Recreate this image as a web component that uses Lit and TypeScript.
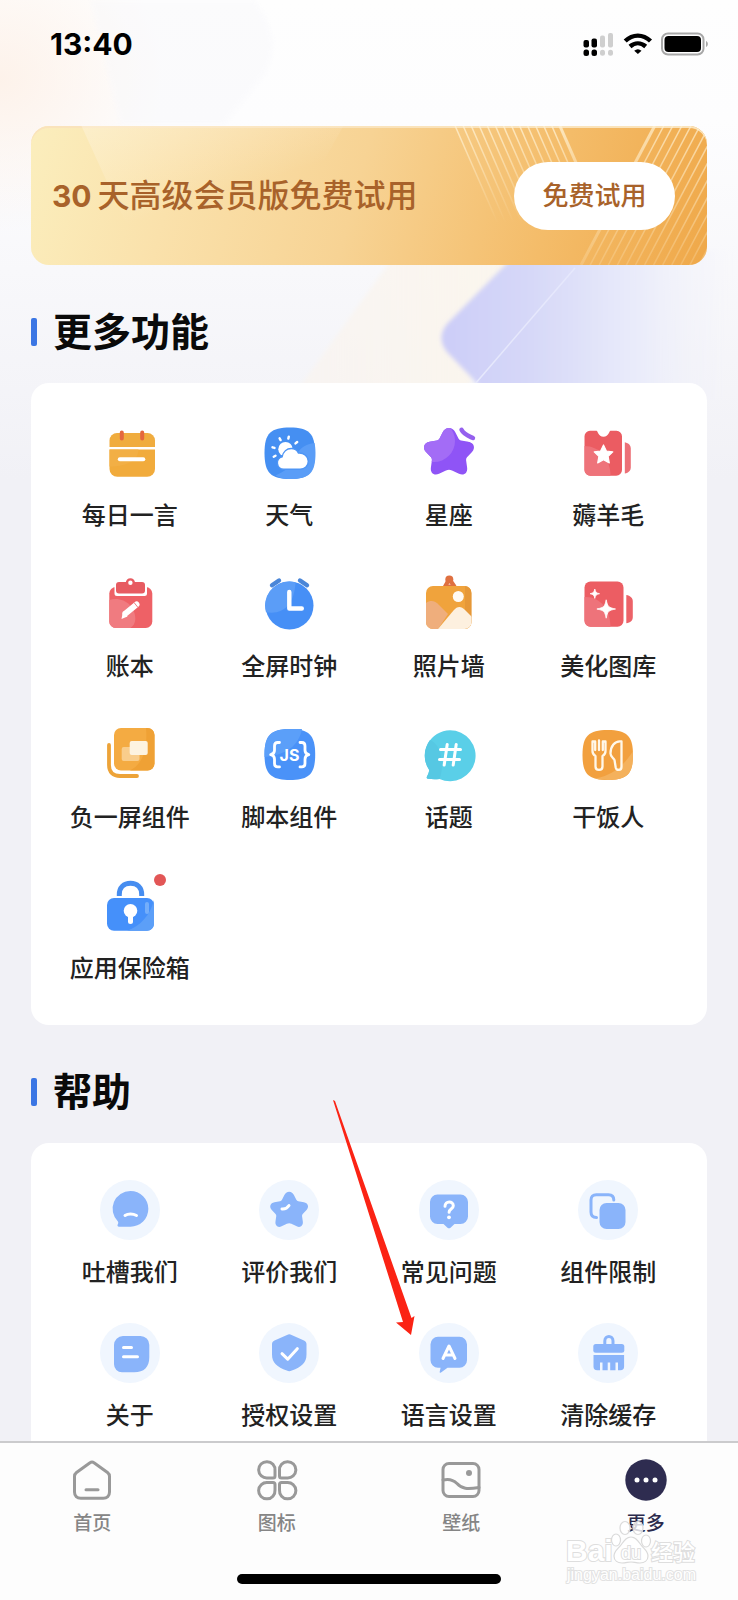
import { LitElement, html, svg, css, TemplateResult, SVGTemplateResult } from "lit";
import { customElement, property } from "lit/decorators.js";

interface Feature {
  label: string;
  icon: SVGTemplateResult;
  badge?: boolean;
}

const STAR =
  "M30 5c3 0 5 1.800 6.300 4.300l3.200 6.200c.6 1 1.400 1.700 2.600 1.900l7.400 1.400c5.500 1 7.300 6.200 3.500 10.200l-5 5.300c-.8.900-1.100 1.900-.9 3l1 7.200c.8 5.500-3.300 8.600-8.100 6.300l-7-3.400c-2-.9-4-.9-6 0l-7 3.400c-4.800 2.300-8.900-.8-8.100-6.300l1-7.200c.2-1.100-.1-2.100-.9-3l-5-5.300c-3.800-4-2-9.200 3.500-10.200l7.400-1.400c1.200-.2 2-.9 2.600-1.900l3.200-6.200C25 6.800 27 5 30 5z";
const SMALL_STAR =
  "M25.500 22l2.900 6 6.400.9-4.700 4.500 1.200 6.500-5.800-3.100-5.800 3.100 1.200-6.500-4.700-4.500 6.400-.9z";

const features: Feature[] = [
  {
    label: "每日一言",
    icon: svg`
      <path d="M17 10h30.500a7.500 7.500 0 0 1 7.500 7.500V24H9.500v-6.500A7.500 7.500 0 0 1 17 10z" fill="#f0ac3e"/>
      <path d="M9.500 26.500H55V46a7.800 7.800 0 0 1-7.800 7.800H17.300A7.800 7.800 0 0 1 9.500 46z" fill="#f1ab3c"/>
      <path d="M9.500 26.500h29c0 10-10 17-29 17z" fill="#f2af45"/>
      <path d="M21.800 9.500v6M42.200 9.500v6" stroke="#e4673d" stroke-width="4" stroke-linecap="round"/>
      <path d="M19.800 36.200h23.500" stroke="#fff" stroke-width="4" stroke-linecap="round"/>`,
  },
  {
    label: "天气",
    icon: svg`
      <path d="M31 4.500c19 0 25 6 25 25.500S50 56 31 56 5.500 50 5.500 30 12 4.500 31 4.500z" fill="#458ff2"/>
      <path d="M55.500 20c-12 1-18 9-19 16-4 8-12 13-20 16.500 4 2.500 8 3.500 15 3.500 19 0 25-6 25-26 0-4-.3-7-1-10z" fill="#5a9df7"/>
      <circle cx="26.500" cy="26.200" r="7.200" fill="#fff"/>
      <path d="M20.600 15.300l1 1.800M29.800 13.600l-.5 2M38.200 19l-1.700 1.400M13.500 24.300l2 .6M14.700 33.700l1.800-1" stroke="#fff" stroke-width="2.400" stroke-linecap="round"/>
      <path d="M24.800 46.300a6.400 6.400 0 0 1-1.600-12.600c1-5 4.600-8.200 9-8.200 3.500 0 6 1.800 7.300 4.600 5.400-.4 9.800 3.400 9.800 8.200 0 4.600-3.600 8-8.200 8z" fill="#fff" stroke="#4e95f5" stroke-width="1.400"/>`,
  },
  {
    label: "星座",
    icon: svg`
      <clipPath id="star-clip"><path d=${STAR}/></clipPath>
      <path d=${STAR} fill="#8f54f6"/>
      <circle cx="15" cy="18" r="21" fill="#a36cf6" clip-path="url(#star-clip)"/>
      <path d="M42.500 7.500c3 4 6 5.500 12 8" fill="none" stroke="#fff" stroke-width="9" stroke-linecap="round"/>
      <path d="M42.500 6.800c2.500 5 6.500 6 11.500 8.200" fill="none" stroke="#9560ee" stroke-width="4.400" stroke-linecap="round"/>`,
  },
  {
    label: "薅羊毛",
    icon: svg`
      <path d="M12 7.800h6.500c1.500 0 1.500 6 7 6s5.500-6 7-6h6a5.500 5.500 0 0 1 5.500 5.500V47a5.800 5.800 0 0 1-5.800 5.800H12.300A5.800 5.800 0 0 1 6.500 47V13.300A5.500 5.500 0 0 1 12 7.800z" fill="#eb5c62"/>
      <path d="M6.500 23c14 0 26 12 26 29.800H12.300A5.800 5.800 0 0 1 6.500 47z" fill="#ee737a"/>
      <path d=${SMALL_STAR} fill="#fff" stroke="#fff" stroke-width="1.200" stroke-linejoin="round"/>
      <path d="M46.800 19.300c4 1 6 3 6 6.700v18c0 3.700-2 5.700-6 6.500z" fill="#ec7077"/>`,
  },
  {
    label: "账本",
    icon: svg`
      <rect x="9.300" y="13" width="43" height="41" rx="6.500" fill="#ee6166"/>
      <path d="M9.300 26c14-4 26 6 26 19 0 4-2 7-5 9H15.800a6.500 6.500 0 0 1-6.500-6.500z" fill="#f07b80"/>
      <path d="M17 8.500h27.500v11H17z" fill="#e75b61" stroke="#fff" stroke-width="5" stroke-linejoin="round"/>
      <rect x="16" y="8" width="29" height="11.500" rx="3" fill="#e75b61"/>
      <circle cx="30.400" cy="8.800" r="3.400" fill="#fff" stroke="#e75b61" stroke-width="2.400"/>
      <path d="M25.500 39.500l11-9" stroke="#fff" stroke-width="6" stroke-linecap="round"/>
      <path d="M23 37l4.500 5.500-6 2.500z" fill="#fff"/>
      <path d="M34 28.500l4 5" stroke="#f07b80" stroke-width="1"/>`,
  },
  {
    label: "全屏时钟",
    icon: svg`
      <circle cx="30.500" cy="31.500" r="24" fill="#468ff6"/>
      <path d="M30.500 7.500a24 24 0 0 1 6 .8c-1 22-12 33-29.500 30a24 24 0 0 1 23.500-30.800z" fill="#5b9df7"/>
      <path d="M13 11.300l7-4.800M48 11.300l-7-4.800" stroke="#4a86d8" stroke-width="4.400" stroke-linecap="round"/>
      <path d="M30.300 18v16.500h12.500" fill="none" stroke="#fff" stroke-width="4.400" stroke-linecap="round" stroke-linejoin="round"/>`,
  },
  {
    label: "照片墙",
    icon: svg`
      <clipPath id="photo-clip"><rect x="7" y="12" width="45.500" height="43" rx="7"/></clipPath>
      <path d="M26 12.500l4.300-7.500 5.200 7.500z" fill="none" stroke="#df7040" stroke-width="4" stroke-linejoin="round"/>
      <circle cx="30.300" cy="5.500" r="4" fill="#df7040"/>
      <g clip-path="url(#photo-clip)">
        <path d="M7 12h45.500v43H7z" fill="#f0a33c"/>
        <path d="M46 12h7v43h-7z" fill="#e69838"/>
        <path d="M7 29c5-3.500 9-2 13 2l9 9-10 15H7z" fill="#efae7c"/>
        <path d="M19 55l15.500-18.500c4-4.500 7.500-4.500 11.500-.5l7 7V55z" fill="#fdf0df"/>
      </g>
      <circle cx="39.300" cy="22.500" r="5.500" fill="#fffaf2"/>`,
  },
  {
    label: "美化图库",
    icon: svg`
      <rect x="6.500" y="7.500" width="39" height="45.300" rx="6" fill="#ec5d63"/>
      <path d="M6.500 23c15-1 26 12 26 29.800h-20a6 6 0 0 1-6-6z" fill="#ee737a"/>
      <path d="M16.800 15c.7 3.300 1.400 4 4.700 4.700-3.300.7-4 1.400-4.700 4.700-.7-3.300-1.400-4-4.700-4.700 3.300-.7 4-1.400 4.700-4.700z" fill="#fff" stroke="#fff" stroke-width=".8"/>
      <path d="M28.200 25.800c1.500 7 2.200 7.700 9.300 9.200-7.100 1.500-7.800 2.200-9.300 9.200-1.500-7-2.200-7.700-9.300-9.200 7.100-1.500 7.800-2.200 9.300-9.200z" fill="#fff" stroke="#fff" stroke-width=".8"/>
      <path d="M48.300 21c4 .8 6.500 2.800 6.500 6.500V43c0 3.700-2.500 5.500-6.500 6.300z" fill="#ec6268"/>`,
  },
  {
    label: "负一屏组件",
    icon: svg`
      <path d="M9 20v20c0 7 4 11 11 11h17" fill="none" stroke="#eda338" stroke-width="3.800" stroke-linecap="round"/>
      <rect x="14" y="3" width="40.500" height="42.500" rx="7" fill="#f4ab42"/>
      <path d="M46 3h1.500a7 7 0 0 1 7 7v28.500a7 7 0 0 1-7 7H30c12-6 18-20 16-42.500z" fill="#efa135"/>
      <rect x="21.700" y="22" width="17.800" height="14" rx="2" fill="#f9cd8b"/>
      <rect x="29.700" y="16" width="18" height="14" rx="2" fill="#fdf3e0"/>`,
  },
  {
    label: "脚本组件",
    icon: svg`
      <path d="M31 4c19 0 25.200 6 25.200 25.500S50 55 31 55 5.500 49 5.500 29.500 12 4 31 4z" fill="#4a92f8"/>
      <path d="M5.600 32C5 12 11 4 31 4h12c-3 16-15 26-37.400 28z" fill="#5b9ff9"/>
      <path d="M20.500 17.500h-1.800c-2.400 0-3.200 1.200-3.200 3.400v4.300c0 2.400-1 3.900-3.800 4.500 2.800.6 3.800 2.100 3.800 4.500v4.300c0 2.200.8 3.400 3.200 3.400h1.800M41 17.500h1.800c2.400 0 3.200 1.200 3.200 3.400v4.300c0 2.400 1 3.900 3.800 4.500-2.800.6-3.800 2.100-3.800 4.500v4.300c0 2.200-.8 3.400-3.200 3.400H41" fill="none" stroke="#fff" stroke-width="2.800" stroke-linecap="round" stroke-linejoin="round"/>
      <text x="30.500" y="35.500" text-anchor="middle" class="glyph">JS</text>`,
  },
  {
    label: "话题",
    icon: svg`
      <path d="M31 5.200a25.500 25.500 0 1 1-10.500 48.700c-4 .4-8 .3-11.700-.2-1.200-.2-1.300-1.300-.8-2.200 1-1.800 2-4 2.200-6.500A25.500 25.500 0 0 1 31 5.200z" fill="#5acfe8"/>
      <path d="M11 15A25.500 25.500 0 0 0 10.200 45c-.2 2.500-1.200 4.700-2.200 6.500-.5.900-.4 2 .8 2.200 3.700.5 7.700.6 11.700.2C25 44 24 20 11 15z" fill="#56c8e3"/>
      <path d="M21.500 24.500h20M20.500 34.500h20M28.200 19.500l-3 20.500M37.200 19.500l-3 20.500" fill="none" stroke="#fff" stroke-width="3" stroke-linecap="round"/>`,
  },
  {
    label: "干饭人",
    icon: svg`
      <path d="M29.700 5C49 5 55 11 55 30s-6 25-25.300 25S4.500 49 4.500 30s6-25 25.200-25z" fill="#f2a03e"/>
      <path d="M55 30c0 19-6 25-25.300 25-5 0-9-.4-12.300-1.400C34 50 45 42 55 26z" fill="#f4b15c"/>
      <path d="M14.500 16.500h2.700v8.500M14.500 16.500V26c0 2.500 1 4 3 5v10.500c0 4.500 7 4.500 7 0V31c2-1 3-2.500 3-5v-9.500h-2.700v8.500M21 15.500V25" fill="none" stroke="#fff8ea" stroke-width="2.300" stroke-linecap="round" stroke-linejoin="round"/>
      <path d="M43.500 16.500c-7-1-11 5-11 12 0 3 2.500 4 4 6.500l1.200 7.500c.8 3.500 5.800 3.200 5.800-.5z" fill="none" stroke="#fff8ea" stroke-width="2.300" stroke-linejoin="round"/>`,
  },
  {
    label: "应用保险箱",
    badge: true,
    icon: svg`
      <path d="M19.300 20v-1.500c0-7 4.500-11.300 11.200-11.300s11.200 4.300 11.200 11.300V20" fill="none" stroke="#468df0" stroke-width="5"/>
      <rect x="7" y="22" width="47" height="32.700" rx="7" fill="#4590fa"/>
      <path d="M54 24v24a7 7 0 0 1-7 6.700H27C40 50 50 40 54 24z" fill="#5c9ff8"/>
      <circle cx="30.500" cy="34.800" r="6.800" fill="#fff"/>
      <path d="M30.500 38v7.500" stroke="#fff" stroke-width="5" stroke-linecap="round"/>
      <path d="M47 28v8" stroke="#74aefa" stroke-width="4" stroke-linecap="round"/>`,
  },
];

const help: Feature[] = [
  {
    label: "吐槽我们",
    icon: svg`
      <path d="M30.500 11a17.700 17.700 0 1 1 0 35.700H19c-1.400 0-1.900-1-1.300-2.200.6-1.100.8-2 .2-3A17.800 17.800 0 0 1 30.500 11z"/>
      <path class="line" d="M25 35.500c3-2 8-2 11.500 0"/>`,
  },
  {
    label: "评价我们",
    icon: svg`
      <g transform="translate(7.500 8) scale(.755)"><path d=${STAR}/></g>
      <path class="line" d="M23 29c3 .3 5.500-1.200 7-3.500"/>`,
  },
  {
    label: "常见问题",
    icon: svg`
      <path d="M18.500 14.500h23a7.500 7.500 0 0 1 7.500 7.500v14.500a7.500 7.500 0 0 1-7.500 7.500h-6l-4 3.700c-1 .8-2 .8-3 0l-4-3.700h-6a7.500 7.500 0 0 1-7.500-7.500V22a7.500 7.500 0 0 1 7.500-7.500z"/>
      <path class="line" d="M26 26.300c0-5.800 8.300-5.600 8.300-.6 0 3.400-4.200 3.300-4.200 6.500"/>
      <circle class="dot" cx="30" cy="37.300" r="1.900"/>`,
  },
  {
    label: "组件限制",
    icon: svg`
      <rect x="21.500" y="23" width="26" height="26" rx="7"/>
      <path class="edge" d="M18.500 37.500c-3.800 0-5.500-2-5.500-5.500V20c0-3.500 2-5.300 5.300-5.300H30.500c3.600 0 5.300 1.800 5.300 5.300"/>`,
  },
  {
    label: "关于",
    icon: svg`
      <path d="M23 13h17.500a8.800 8.800 0 0 1 8.800 8.800v12.400C49.300 44 44 49.300 34.200 49.300H22a8 8 0 0 1-8-8V22a9 9 0 0 1 9-9z"/>
      <path class="line" d="M23.500 24.500h8M23.500 33.700h14"/>`,
  },
  {
    label: "授权设置",
    icon: svg`
      <path d="M28 12c1.600-.9 3-.9 4.600 0L45 17.500c1.700.8 2.500 2 2.500 3.800v10c0 9-5 12.500-14.700 16.300-1.700.7-3.300.7-5 0C18 43.800 13 40.300 13 31.300v-10c0-1.800.8-3 2.500-3.800z"/>
      <path class="line" d="M23 30.700l5.700 5.500 9.600-10.500"/>`,
  },
  {
    label: "语言设置",
    icon: svg`
      <path d="M19 13.700h21.500a7.500 7.500 0 0 1 7.500 7.500v16a7.500 7.500 0 0 1-7.500 7.500h-12L22 49.500c-.8.600-1.500.1-1.300-.8l.9-4H19a7.500 7.500 0 0 1-7.500-7.500v-16a7.500 7.500 0 0 1 7.500-7.500z"/>
      <path class="line" d="M24 35.500l6-12.500 6 12.500M26.500 32h7.500"/>`,
  },
  {
    label: "清除缓存",
    icon: svg`
      <path class="edge" d="M26.800 22v-4c0-6 8.200-6 8.200 0v4"/>
      <rect x="15.300" y="21" width="31" height="8.800" rx="2.500"/>
      <path d="M15.500 32h30.600v11.500c0 2.500-1.200 3.700-3.700 3.700H40V39.500h-2.500v7.700h-5.300V39.500h-2.500v7.700h-5.200V39.500H22v7.700h-2.800c-2.500 0-3.700-1.200-3.700-3.700z"/>`,
  },
];

const tabs: Feature[] = [
  {
    label: "首页",
    icon: svg`
      <path d="M22 6.700c1.300-1 2.700-1 4 0l13.500 9.800c1.300 1 2 2.300 2 3.900V36c0 4-2.500 6.300-6.300 6.300H12.800C9 42.300 6.500 40 6.500 36V20.400c0-1.600.7-2.900 2-3.900z"/>
      <path d="M18 33.800h12"/>`,
  },
  {
    label: "图标",
    icon: svg`
      <path d="M22 14.500V20a2 2 0 0 1-2 2h-5.500a8.200 8.200 0 1 1 7.500-7.500zM26.500 14.500V20a2 2 0 0 0 2 2H34a8.200 8.200 0 1 0-7.500-7.500zM22 34v-5.500a2 2 0 0 0-2-2h-5.500A8.200 8.200 0 1 0 22 34zM26.500 34v-5.500a2 2 0 0 1 2-2H34a8.200 8.200 0 1 1-7.500 7.500z"/>`,
  },
  {
    label: "壁纸",
    icon: svg`
      <rect x="6" y="7.500" width="36" height="33" rx="6"/>
      <path d="M6 24c6-1.500 10-.5 14 3.500 5 5.500 10 6 22 4"/>
      <circle class="solid" cx="32" cy="17" r="3"/>`,
  },
  {
    label: "更多",
    icon: svg`
      <circle class="disc" cx="24" cy="24" r="20.700"/>
      <circle class="hole" cx="15" cy="24" r="2.500"/>
      <circle class="hole" cx="24" cy="24" r="2.500"/>
      <circle class="hole" cx="33" cy="24" r="2.500"/>`,
  },
];

const FONT = css`Inter, "Noto Sans CJK SC", "Liberation Sans", sans-serif`;

@customElement("status-bar")
class StatusBar extends LitElement {
  static styles = css`
    :host {
      display: flex;
      align-items: center;
      justify-content: space-between;
      height: 88px;
      padding: 0 30px 0 50px;
    }
    .time {
      font: 700 30px/40px ${FONT};
      color: #000;
    }
    .signals {
      display: block;
      width: 126px;
      height: 24px;
    }
  `;

  render() {
    return html`
      <span class="time">13:40</span>
      <svg class="signals" viewBox="0 0 126 24" role="img" aria-label="信号、无线网络和电量">
        <g>
          <rect x="1.500" y="8" width="5.500" height="7.500" rx="2"/>
          <rect x="9.500" y="6.500" width="5.500" height="9" rx="2"/>
          <rect x="1.500" y="17.500" width="5.500" height="6.500" rx="2.500"/>
          <rect x="9.500" y="17.500" width="5.500" height="6.500" rx="2.500"/>
        </g>
        <g fill="#cfcfcf">
          <rect x="18" y="3.500" width="5" height="12" rx="2"/>
          <rect x="26" y="1" width="5" height="14.500" rx="2"/>
          <rect x="18" y="17.800" width="5" height="6" rx="2.500"/>
          <rect x="26" y="17.800" width="5" height="6" rx="2.500"/>
        </g>
        <g fill="none" stroke="#000" stroke-width="4.400">
          <path d="M43.200 9c7.500-7.200 17.800-7.200 25.300 0"/>
          <path d="M48 14.500c4.800-4.200 10.900-4.200 15.700 0"/>
        </g>
        <path d="M52.200 18.700c2.300-2 5-2 7.300 0L55.900 22z"/>
        <rect x="80" y="1.500" width="41.500" height="21" rx="6" fill="none" stroke="#a8a8a8" stroke-width="2"/>
        <rect x="82.500" y="4" width="36.500" height="16" rx="4"/>
        <path d="M124 9c2.500.8 2.500 5.200 0 6z" fill="#a8a8a8"/>
      </svg>
    `;
  }
}

@customElement("trial-banner")
class TrialBanner extends LitElement {
  static styles = css`
    :host {
      display: grid;
      border-radius: 18px;
      overflow: hidden;
      background: linear-gradient(105deg, #fbeebd 0%, #fae1ab 22%, #f7d394 48%, #f4bc69 76%, #efa849 100%);
      box-shadow: inset 0 2px #fae3bb;
      height: 139px;
    }
    .rays,
    .content {
      grid-area: 1 / 1;
      min-width: 0;
      min-height: 0;
    }
    .rays {
      width: 100%;
      height: 100%;
    }
    .content {
      display: flex;
      align-items: center;
      justify-content: space-between;
      padding: 0 32px 0 21px;
    }
    .title {
      margin: 0;
      font: 500 32px/48px ${FONT};
      color: #a8622a;
      display: flex;
      align-items: center;
      gap: 6px;
    }
    .days {
      font-weight: 700;
      font-size: 30px;
    }
    .trial {
      width: 161px;
      height: 68px;
      border: 0;
      border-radius: 34px;
      padding: 0;
      background: #fff;
      color: #a8622a;
      font: 500 26px/36px ${FONT};
      white-space: nowrap;
    }
  `;

  render() {
    const left = Array.from({ length: 14 }, (_, i) => i);
    const right = Array.from({ length: 15 }, (_, i) => i);
    return html`
      <svg class="rays" viewBox="0 0 678 138" preserveAspectRatio="xMaxYMid slice" aria-hidden="true">
        <defs>
          <linearGradient id="fade" x1="0" y1="0" x2="0" y2="1">
            <stop offset="0" stop-color="#fff1d2" stop-opacity=".8"/>
            <stop offset="1" stop-color="#fff1d2" stop-opacity="0"/>
          </linearGradient>
          <linearGradient id="fade-right" x1="0" y1="0" x2="0" y2="1">
            <stop offset="0" stop-color="#fff1d2" stop-opacity=".7"/>
            <stop offset="1" stop-color="#fff1d2" stop-opacity=".2"/>
          </linearGradient>
          <linearGradient id="glow" x1="0" y1="0" x2=".6" y2="1">
            <stop offset="0" stop-color="#fff6e6" stop-opacity=".4"/>
            <stop offset=".6" stop-color="#fff6e6" stop-opacity="0"/>
          </linearGradient>
        </defs>
        <path d="M57 0h260L240 138H120z" fill="url(#glow)"/>
        ${left.map((i) => svg`<path d="M${428 + i * 8} 0L${470 + i * 8} 96" fill="none" stroke="url(#fade)" stroke-width=${i === 13 ? 3 : 1.5}/>`)}
        ${right.map((i) => svg`<path d="M${626 + i * 9} 0L${553 + i * 9} 138" fill="none" stroke="url(#fade-right)" stroke-width=${i === 0 ? 3 : 1.5}/>`)}
      </svg>
      <div class="content">
        <p class="title"><span class="days">30</span>天高级会员版免费试用</p>
        <button class="trial" type="button">免费试用</button>
      </div>
    `;
  }
}

@customElement("feature-grid")
class FeatureGrid extends LitElement {
  @property({ attribute: false }) items: Feature[] = [];
  @property({ type: Boolean, reflect: true }) soft = false;

  static styles = css`
    :host {
      display: grid;
      grid-template-columns: repeat(4, minmax(0, 1fr));
      row-gap: 40px;
      padding: 40px 19px 38px;
      border-radius: 18px;
      background: #fff;
    }
    :host([soft]) {
      row-gap: 32px;
      padding-top: 37px;
    }
    .item {
      display: flex;
      flex-direction: column;
      align-items: center;
      gap: 15px;
      padding: 0;
      border: 0;
      background: none;
      color: #222;
      font: 500 24px/36px ${FONT};
      white-space: nowrap;
    }
    .pic {
      position: relative;
      width: 60px;
      height: 60px;
      border-radius: 50%;
    }
    .icon {
      display: block;
      width: 60px;
      height: 60px;
    }
    .badge {
      position: absolute;
      top: -2px;
      right: -6px;
      width: 12px;
      height: 12px;
      border-radius: 50%;
      background: #e25656;
    }
    .glyph {
      fill: #fff;
      font: 700 16px Inter, sans-serif;
    }
    :host([soft]) .pic {
      background: #f0f6fe;
    }
    :host([soft]) .icon {
      fill: #8ab4fa;
    }
    .line {
      fill: none;
      stroke: #fff;
      stroke-width: 3;
      stroke-linecap: round;
      stroke-linejoin: round;
    }
    .edge {
      fill: none;
      stroke: #8ab4fa;
      stroke-width: 3;
      stroke-linecap: round;
    }
    .dot {
      fill: #fff;
    }
  `;

  render() {
    return this.items.map(
      (item) => html`
        <button class="item" type="button">
          <span class="pic">
            <svg class="icon" viewBox="0 0 60 60" aria-hidden="true">${item.icon}</svg>
            ${item.badge ? html`<span class="badge"></span>` : null}
          </span>
          <span>${item.label}</span>
        </button>
      `
    );
  }
}

@customElement("tab-bar")
class TabBar extends LitElement {
  static styles = css`
    :host {
      display: block;
      position: relative;
      border-top: 2px solid #cbcbcd;
      background: #fdfdfd;
      padding: 13px 0 16px;
    }
    .tabs {
      display: grid;
      grid-template-columns: repeat(4, minmax(0, 1fr));
    }
    .tab {
      display: flex;
      flex-direction: column;
      align-items: center;
      gap: 6px;
      color: #858585;
      font: 500 19px/28px ${FONT};
      text-decoration: none;
    }
    .tab.active {
      color: #2b2a4c;
    }
    .icon {
      width: 48px;
      height: 48px;
      fill: none;
      stroke: #999;
      stroke-width: 3;
      stroke-linecap: round;
      stroke-linejoin: round;
    }
    .solid {
      fill: #999;
      stroke: none;
    }
    .disc {
      fill: #2e2c50;
      stroke: none;
    }
    .hole {
      fill: #fff;
      stroke: none;
    }
    .indicator {
      width: 264px;
      height: 10px;
      margin: 36px auto 0;
      border-radius: 5px;
      background: #000;
    }
    .mark {
      position: absolute;
      right: 36px;
      bottom: 12px;
      width: 140px;
      height: 72px;
      pointer-events: none;
    }
    .mark text {
      fill: #fff;
      stroke: #dedede;
      stroke-width: 2;
      paint-order: stroke;
      font-family: "Liberation Sans", "Noto Sans CJK SC", sans-serif;
      font-weight: 700;
    }
    .mark .big {
      font-size: 30px;
    }
    .mark .mid {
      font-size: 22px;
      font-weight: 500;
    }
    .mark .du {
      font-size: 18px;
      font-weight: 400;
    }
    .mark .small {
      font-size: 16px;
      font-weight: 400;
      stroke: #e2e2e2;
    }
    .paw {
      fill: #fff;
      fill-opacity: 0.8;
      stroke: #dadada;
      stroke-width: 1.200;
    }
  `;

  render() {
    return html`
      <nav class="tabs">
        ${tabs.map(
          (tab, i) => html`
            <a class="tab ${i === 3 ? "active" : ""}" href="#">
              <svg class="icon" viewBox="0 0 48 48" aria-hidden="true">${tab.icon}</svg>
              <span>${tab.label}</span>
            </a>
          `
        )}
      </nav>
      <div class="indicator"></div>
      <svg class="mark" viewBox="0 0 140 72" aria-hidden="true">
        <text class="big" x="4" y="45">Bai</text>
        <g class="paw">
          <ellipse cx="54" cy="24" rx="4.500" ry="6"/>
          <ellipse cx="63" cy="12" rx="5" ry="6.500"/>
          <ellipse cx="76" cy="12" rx="5" ry="6.500"/>
          <ellipse cx="84" cy="25" rx="4.500" ry="6"/>
          <path d="M69 21c5 0 7 4 10 8s7 6 7 11-4 7-8 7-6-1-9-1-5 1-9 1-8-2-8-7 4-7 7-11 5-8 10-8z"/>
        </g>
        <text class="du" x="59" y="43">du</text>
        <text class="mid" x="89" y="44">经验</text>
        <text class="small" x="5" y="64">jingyan.baidu.com</text>
      </svg>
    `;
  }
}

@customElement("app-root")
class AppRoot extends LitElement {
  static styles = css`
    :host {
      display: grid;
      height: 100vh;
      overflow: hidden;
      background: linear-gradient(#fefefe 0, #fdfdfe 120px, #f8f8fb 270px, #f1f1f6 480px, #f1f1f6 100%);
      font-family: ${FONT};
    }
    .backdrop,
    .page {
      grid-area: 1 / 1;
      min-width: 0;
      min-height: 0;
    }
    .backdrop {
      width: 100%;
      height: 400px;
    }
    .page {
      display: flex;
      flex-direction: column;
    }
    .content {
      flex: 1;
      min-height: 0;
      overflow: hidden auto;
      scrollbar-width: none;
      padding: 38px 31px 0;
    }
    .section {
      position: relative;
    }
    .heading {
      display: flex;
      align-items: center;
      gap: 16px;
      margin: 0;
      padding: 43px 0 27px;
      font-size: 39px;
      line-height: 48px;
      font-weight: 600;
      color: #0a0a0a;
    }
    .heading::before {
      content: "";
      width: 6px;
      height: 28px;
      border-radius: 2px;
      background: #3b76e4;
    }
    .arrow {
      position: absolute;
      left: 299px;
      top: 74px;
      width: 90px;
      height: 240px;
      fill: #fb2314;
      pointer-events: none;
    }
  `;

  render(): TemplateResult {
    return html`
      <svg class="backdrop" viewBox="0 0 738 400" preserveAspectRatio="none" aria-hidden="true">
        <defs>
          <radialGradient id="peach">
            <stop offset="0" stop-color="#fdf1e8" stop-opacity=".9"/>
            <stop offset="1" stop-color="#fdf1e8" stop-opacity="0"/>
          </radialGradient>
          <linearGradient id="violet" x1="0" y1="0" x2="1" y2="0">
            <stop offset="0" stop-color="#cccdf8"/>
            <stop offset=".3" stop-color="#d6d8f8"/>
            <stop offset=".65" stop-color="#e9ebfa"/>
            <stop offset="1" stop-color="#f4f4fa" stop-opacity="0"/>
          </linearGradient>
          <linearGradient id="cream" x1="0" y1="0" x2="1" y2="0">
            <stop offset="0" stop-color="#faf4ee" stop-opacity=".6"/>
            <stop offset="1" stop-color="#fbf6ec"/>
          </linearGradient>
          <filter id="soften"><feGaussianBlur stdDeviation="2"/></filter>
        </defs>
        <ellipse cx="0" cy="80" rx="170" ry="150" fill="url(#peach)"/>
        <path d="M90 0h165q30 40 10 75l-40 50H120z" fill="#f8f8fb" opacity=".45" filter="url(#soften)"/>
        <path d="M395 255h150L460 400H290z" fill="url(#cream)" filter="url(#soften)"/>
        <path d="M520 250L447 324q-11 14 0 28l48 50h243V250z" fill="url(#violet)" filter="url(#soften)"/>
        <path d="M575 268L475 384" stroke="#e6e8fc" stroke-width="1.500"/>
      </svg>
      <div class="page">
        <status-bar></status-bar>
        <main class="content">
          <trial-banner></trial-banner>
          <section class="section">
            <h2 class="heading">更多功能</h2>
            <feature-grid .items=${features}></feature-grid>
          </section>
          <section class="section">
            <h2 class="heading">帮助</h2>
            <feature-grid soft .items=${help}></feature-grid>
            <svg class="arrow" viewBox="0 0 90 240" aria-hidden="true">
              <path d="M3 1l2 1L81.500 219l3-2L81 236 66 223.500l7-.5z"/>
            </svg>
          </section>
        </main>
        <tab-bar></tab-bar>
      </div>
    `;
  }
}
